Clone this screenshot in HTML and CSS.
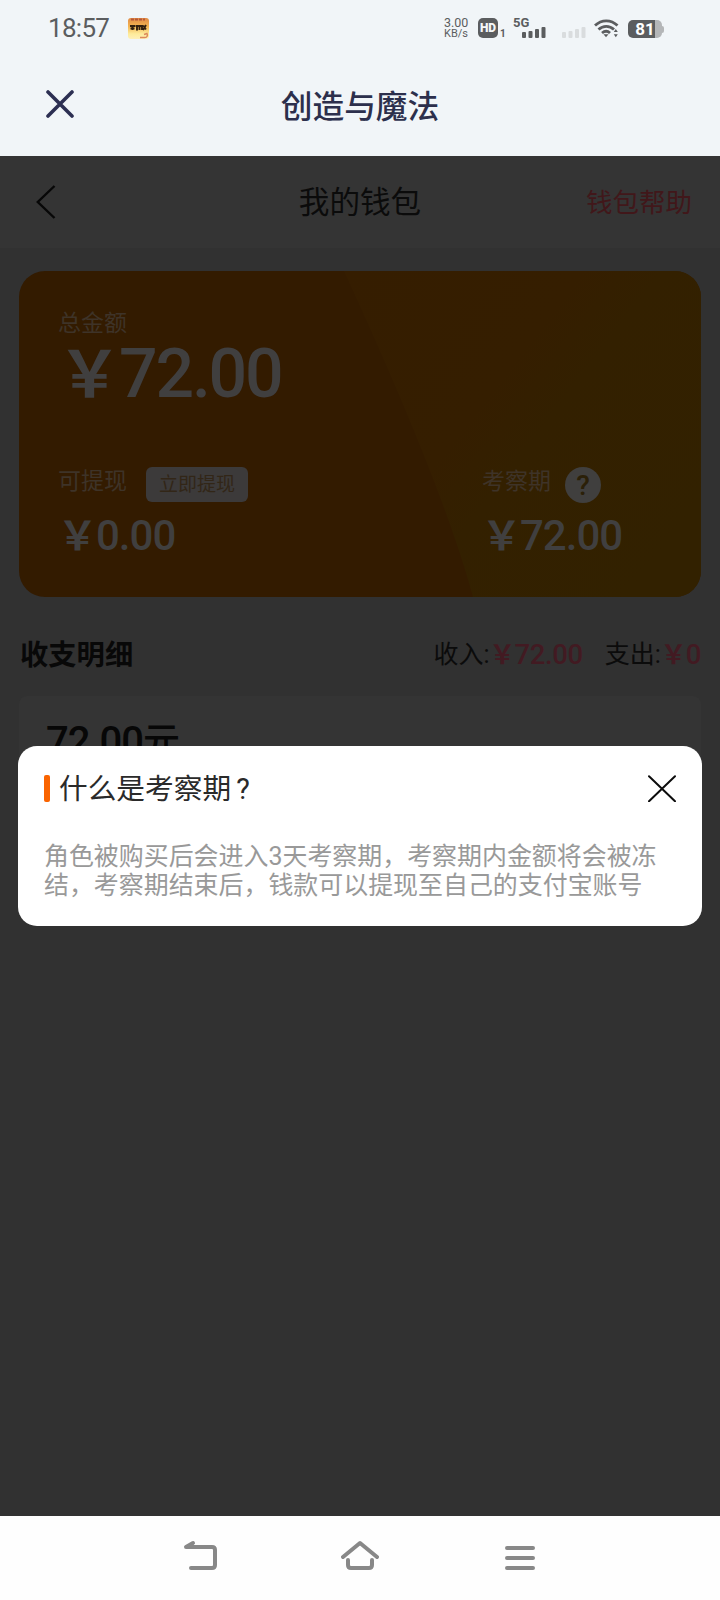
FILE: index.html
```html
<!DOCTYPE html>
<html lang="zh-CN">
<head>
<meta charset="utf-8">
<title>创造与魔法</title>
<link rel="stylesheet" href="styles.css">
</head>
<body>
<div class="phone">
  <div class="status">
    <span class="clock">18:57</span>
    <svg class="app-icon" width="21" height="21" viewBox="0 0 21 21">
      <defs><linearGradient id="ag" x1="0" y1="0" x2="0" y2="1"><stop offset="0" stop-color="#e08a45"/><stop offset=".4" stop-color="#f5b552"/><stop offset=".75" stop-color="#fdeb9a"/><stop offset="1" stop-color="#fff0b8"/></linearGradient></defs>
      <rect width="21" height="21" rx="3" fill="url(#ag)"/>
      <path d="M3 1.5h14" stroke="#b5573a" stroke-width="2" stroke-dasharray="3 1"/>
      <path d="M2 8h5M4.500 7v5M2.500 10.500h4M7.500 8h3M9 7v5.500M11.500 12V8h2.500V12M15 7.500l3 4M18 7l-3 5" stroke="#33200f" stroke-width="1.900" fill="none"/>
      <path d="M12 19.500h5c2 0 3-2 2-4l-3 1" stroke="#dc8a5c" stroke-width="1.500" fill="none"/>
    </svg>
    <div class="status-right">
      <div class="speed"><span>3.00</span><span>KB/s</span></div>
      <div class="hd"><span class="hd-box">HD</span><span class="hd-sim">1</span></div>
      <div class="cell"><span class="cell-label">5G</span>
        <svg class="cell-bars" width="24" height="11" viewBox="0 0 24 11" fill="#5b5d5f"><rect x="0" y="5" width="4" height="6" rx="1"/><rect x="6.500" y="4" width="4" height="7" rx="1"/><rect x="13" y="2" width="4" height="9" rx="1"/><rect x="19.500" y="0" width="4" height="11" rx="1"/></svg>
      </div>
      <svg class="cell-empty" width="24" height="11" viewBox="0 0 24 11" fill="#d9dcde"><rect x="0" y="5" width="4" height="6" rx="1"/><rect x="6.500" y="4" width="4" height="7" rx="1"/><rect x="13" y="2" width="4" height="9" rx="1"/><rect x="19.500" y="0" width="4" height="11" rx="1"/></svg>
      <svg class="wifi" width="25" height="19" viewBox="0 0 25 19" fill="none" stroke="#5b5d5f" stroke-width="2.800"><path d="M1 6.500C7.500.2 17 .2 23.500 6.500"/><path d="M4.500 10.500c4.500-4.300 11-4.300 15.500 0"/><path d="M8 14c2.700-2.300 5.600-2.300 8 0"/><path d="M9.500 15.300h5l-2.500 3z" fill="#5b5d5f" stroke="none"/><path d="M21.800 10l2 3h-4zM21.800 18.300l2-3h-4z" fill="#5b5d5f" stroke="none"/></svg>
      <div class="battery"><span class="battery-body">81</span><span class="battery-tip"></span></div>
    </div>
  </div>
  <div class="titlebar">
    <svg width="28" height="28" viewBox="0 0 28 28" fill="none" stroke="#2c2f52" stroke-width="3.600" stroke-linecap="round"><path d="M2 2l24 24M26 2L2 26"/></svg>
    <h1>创造与魔法</h1>
  </div>

  <div class="webview">
    <div class="wallet-head">
      <svg class="back" width="20" height="34" viewBox="0 0 20 34" fill="none" stroke="#070707" stroke-width="2.400"><path d="M18.500 1L1.800 17l16.700 16"/></svg>
      <h2>我的钱包</h2>
      <a class="help">钱包帮助</a>
    </div>

    <section class="card">
      <svg class="card-facet" viewBox="0 0 682 326" preserveAspectRatio="none"><defs><linearGradient id="cg" x1="0" y1="0" x2="1" y2=".7"><stop offset="0" stop-color="#351d00"/><stop offset=".45" stop-color="#351e00"/><stop offset=".6" stop-color="#332000"/><stop offset="1" stop-color="#322100"/></linearGradient></defs><path d="M325 0H682V326H454Q424 215 325 0z" fill="url(#cg)"/></svg>
      <div class="total">
        <div class="label">总金额</div>
        <div class="amount big"><span class="yen">￥</span>72.00</div>
      </div>
      <div class="balances">
        <div class="balance">
          <div class="row"><span class="label">可提现</span><span class="withdraw">立即提现</span></div>
          <div class="amount"><span class="yen">￥</span>0.00</div>
        </div>
        <div class="balance pending">
          <div class="row"><span class="label">考察期</span><span class="question">?</span></div>
          <div class="amount"><span class="yen">￥</span>72.00</div>
        </div>
      </div>
    </section>

    <div class="ledger-head">
      <h3>收支明细</h3>
      <div class="sums">
        <span class="sum">收入:<b><span class="yen">￥</span>72.00</b></span>
        <span class="sum">支出:<b><span class="yen">￥</span>0</b></span>
      </div>
    </div>
    <div class="entry"><span class="entry-amount">72.00<i>元</i></span></div>

    <div class="dialog">
      <div class="dialog-head">
        <span class="mark"></span>
        <h4>什么是考察期<span class="qm">?</span></h4>
        <svg class="close" width="28" height="27" viewBox="0 0 28 27" fill="none" stroke="#0c0c0c" stroke-width="2" stroke-linecap="round"><path d="M1 1.200l26 25M27 1.200L1 26.200"/></svg>
      </div>
      <p>角色被购买后会进入3天考察期，考察期内金额将会被冻<br>结，考察期结束后，钱款可以提现至自己的支付宝账号</p>
    </div>
  </div>

  <div class="navbar">
    <svg width="34" height="30" viewBox="0 0 34 30" fill="none" stroke="#888" stroke-width="4" stroke-linecap="round" stroke-linejoin="round"><path d="M8 28h21q3 0 3-3V10q0-3-3-3H3l7-4"/></svg>
    <svg width="38" height="30" viewBox="0 0 38 30" fill="none" stroke="#888" stroke-width="4" stroke-linecap="round" stroke-linejoin="round"><path d="M2 17L19 3l17 14M7 20v5q0 3 3 3h18q3 0 3-3v-5"/></svg>
    <svg class="menu" width="30" height="30" viewBox="0 0 30 30" fill="none" stroke="#888" stroke-width="4" stroke-linecap="round"><path d="M2 8h26M2 18h26M2 28h26"/></svg>
  </div>
</div>
</body>
</html>
```
FILE: styles.css
```css
* { box-sizing: border-box; }
body { margin: 0; font-family: Roboto, "Noto Sans CJK SC", sans-serif; }
h1, h2, h3, h4, p { margin: 0; font-weight: 400; }
svg { display: block; flex: none; }
i { font-style: normal; }
.phone { width: 720px; height: 1600px; display: flex; flex-direction: column; background: #f1f5f8; overflow: hidden; }

.status { height: 56px; display: flex; align-items: center; padding: 0 55px 0 48px; color: #5b5d5f; }
.clock { font-size: 26px; line-height: 56px; width: 80px; letter-spacing: -0.7px; }
.status-right { margin-left: auto; display: flex; align-items: center; height: 56px; }
.speed { display: flex; flex-direction: column; font-size: 11px; line-height: 10px; width: 34px; gap: 1px; padding-top: 1px; }
.speed span { height: 10px; }
.speed span:first-child { font-size: 12.500px; }
.hd { display: flex; align-items: flex-end; height: 20px; width: 35px; }
.hd-box { width: 20px; height: 20px; border-radius: 5px; background: #5b5d5f; color: #f4f6f8; font-size: 12px; font-weight: 900; line-height: 20px; text-align: center; }
.hd-sim { font-size: 10px; font-weight: 700; line-height: 9px; margin-left: 2px; }
.cell { width: 49px; height: 20px; display: flex; flex-direction: column; }
.cell-label { font-size: 13px; font-weight: 700; line-height: 10px; height: 9px; }
.cell-bars { margin-left: 9px; }
.cell-empty { margin-top: 9px; }
.wifi { margin-left: 8px; }
.battery { display: flex; align-items: center; margin: 2px 0 0 9px; width: 37px; }
.battery-body { width: 34px; height: 18px; border-radius: 5px; background: linear-gradient(90deg, #5b5d5f 80%, #b4b6b8 80%); color: #fff; font-size: 17px; font-weight: 700; line-height: 19px; text-align: center; }
.battery-tip { width: 2px; height: 7px; background: #b4b6b8; border-radius: 0 2px 2px 0; }

.titlebar { height: 100px; display: grid; grid-template-columns: 60px 1fr 60px; align-items: center; padding: 0 46px; }
.titlebar svg { margin-top: -4px; }
.titlebar h1 { padding-top: 4px; text-align: center; font-size: 31.700px; line-height: 44px; font-weight: 500; color: #2c2f4c; }

.webview { position: relative; flex: 1; background: #313131; }
.wallet-head { height: 92px; background: #343434; display: grid; grid-template-columns: 120px 1fr 120px; align-items: center; padding: 0 28px; }
.wallet-head .back { margin-left: 8px; }
.wallet-head h2 { padding-top: 2px; text-align: center; font-size: 30.600px; line-height: 44px; color: #0b0b0b; }
.help { justify-self: end; padding-top: 1px; font-size: 26.500px; line-height: 40px; color: #41171a; white-space: nowrap; }

.card { position: relative; margin: 23px 19px 0; height: 326px; border-radius: 26px; background: #331b00; overflow: hidden; padding: 38px 38px 0 39px; color: #403f3f; }
.card-facet { position: absolute; inset: 0; width: 100%; height: 100%; }
.total, .balances { position: relative; }
.label { font-size: 23px; line-height: 30px; color: #3e3328; }
.yen { font-family: "Noto Sans CJK SC", sans-serif; font-weight: 700; display: flex; justify-content: center; }
.amount { font-size: 42px; line-height: 50px; font-weight: 500; display: flex; letter-spacing: -1px; }
.amount .yen { width: 38px; font-size: 40px; line-height: 45px; height: 45px; }
.amount.big { font-size: 68px; line-height: 70px; height: 70px; letter-spacing: -2.200px; }
.amount.big .yen { width: 61px; font-size: 64px; line-height: 60px; height: 60px; }
.balances { display: flex; margin-top: 58px; }
.balance { width: 424px; }
.pending { width: auto; }
.row { display: flex; height: 44px; }
.withdraw { margin-left: 19px; width: 102px; height: 35px; border-radius: 6px; background: #3c3a3a; color: #322617; font-size: 19px; line-height: 35px; text-align: center; }
.question { margin-left: 14px; width: 36px; height: 36px; border-radius: 50%; background: #403f3e; color: #2b2008; font-size: 28px; font-weight: 500; line-height: 37px; text-align: center; }

.ledger-head { height: 99px; display: flex; justify-content: space-between; align-items: center; padding: 17px 19px 0 20px; }
.ledger-head h3 { padding-top: 1px; font-size: 28.300px; font-weight: 700; line-height: 40px; color: #080808; }
.sums { display: flex; gap: 22px; font-size: 25px; line-height: 40px; color: #0b0b0b; }
.sum { display: flex; }
.sum b { font-weight: 500; font-size: 27.500px; color: #421a22; display: flex; letter-spacing: -0.4px; }
.sum .yen { width: 25px; font-size: 26px; line-height: 36px; }
.entry { margin: 0 19px; height: 130px; background: #343434; border-radius: 8px; padding: 18px 27px; }
.entry-amount { font-size: 40px; font-weight: 500; line-height: 56px; color: #070707; letter-spacing: -1px; }
.entry-amount i { font-size: 37px; }

.dialog { position: absolute; left: 18px; right: 18px; top: 590px; height: 180px; background: #fff; border-radius: 19px; padding: 21px 26px; }
.dialog-head { display: flex; align-items: center; height: 42px; }
.mark { width: 6px; height: 27px; border-radius: 2px; background: #fa6400; }
.dialog h4 { margin-left: 9px; padding-top: 2px; font-size: 28.700px; line-height: 42px; color: #2a2a2a; }
.qm { margin-left: 5px; }
.close { margin-left: auto; }
.dialog p { margin-top: 33px; font-size: 24.950px; line-height: 29px; color: #999; white-space: nowrap; }

.navbar { height: 84px; background: #fefefe; display: flex; align-items: flex-start; justify-content: center; gap: 124px; padding: 24px 2px 0 0; }
.menu { margin-left: 2px; }
```
